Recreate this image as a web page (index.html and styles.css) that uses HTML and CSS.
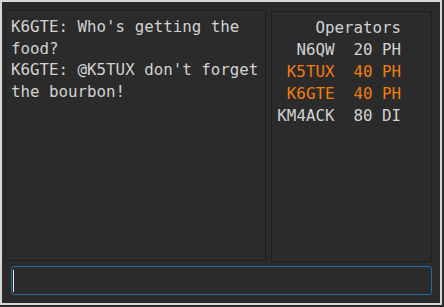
FILE: index.html
```html
<!DOCTYPE html>
<html lang="en">
<head>
    <meta charset="UTF-8">
    <title>Chat</title>
    <link rel="stylesheet" href="styles.css">
</head>
<body>

<div class="window">
    <div class="top">
        <div class="chat">
            <div class="msg">K6GTE: Who's getting the food?</div>
            <div class="msg">K6GTE: @K5TUX don't forget the bourbon!</div>
        </div>
        <div class="ops">
            <div class="row">Operators</div>
            <div class="row">N6QW&nbsp;&nbsp;20 PH</div>
            <div class="row active">K5TUX&nbsp;&nbsp;40 PH</div>
            <div class="row active">K6GTE&nbsp;&nbsp;40 PH</div>
            <div class="row">KM4ACK&nbsp;&nbsp;80 DI</div>
        </div>
    </div>
    <div class="entry"><span class="cursor"></span></div>
</div>

</body>
</html>
```

FILE: styles.css
```css
body {
    margin: 0;
    background-color: #2b2b2b;
    font-family: "DejaVu Sans Mono", monospace;
    font-size: 15.8px;
    color: #d2d2d2;
}
.window {
    width: 442px;
    height: 305px;
    box-sizing: border-box;
    border: 2px solid #d7d7d3;
    padding: 8px 0 0 3px;
    display: flex;
    flex-direction: column;
}
.top {
    display: flex;
    gap: 5px;
    height: 252px;
}
.chat {
    width: 261px;
    height: 251px;
    box-sizing: border-box;
    border: 1px solid #1f1f1f;
    padding: 5px 2px 0 5px;
    line-height: 21.5px;
}
.ops {
    width: 161px;
    height: 251px;
    margin-top: 1px;
    box-sizing: border-box;
    border: 1px solid #1f1f1f;
    padding: 5px 30px 0 0;
    text-align: right;
    line-height: 22px;
    white-space: nowrap;
}
.active {
    color: #f27d0c;
}
.entry {
    width: 421px;
    height: 29px;
    margin: 4px 0 0 6px;
    box-sizing: border-box;
    border: 1px solid #1d6ca3;
    border-radius: 3px;
    padding: 3px 2px 3px 1px;
}
.cursor {
    display: block;
    width: 1px;
    height: 22px;
    background-color: #e6e6e6;
}
```
